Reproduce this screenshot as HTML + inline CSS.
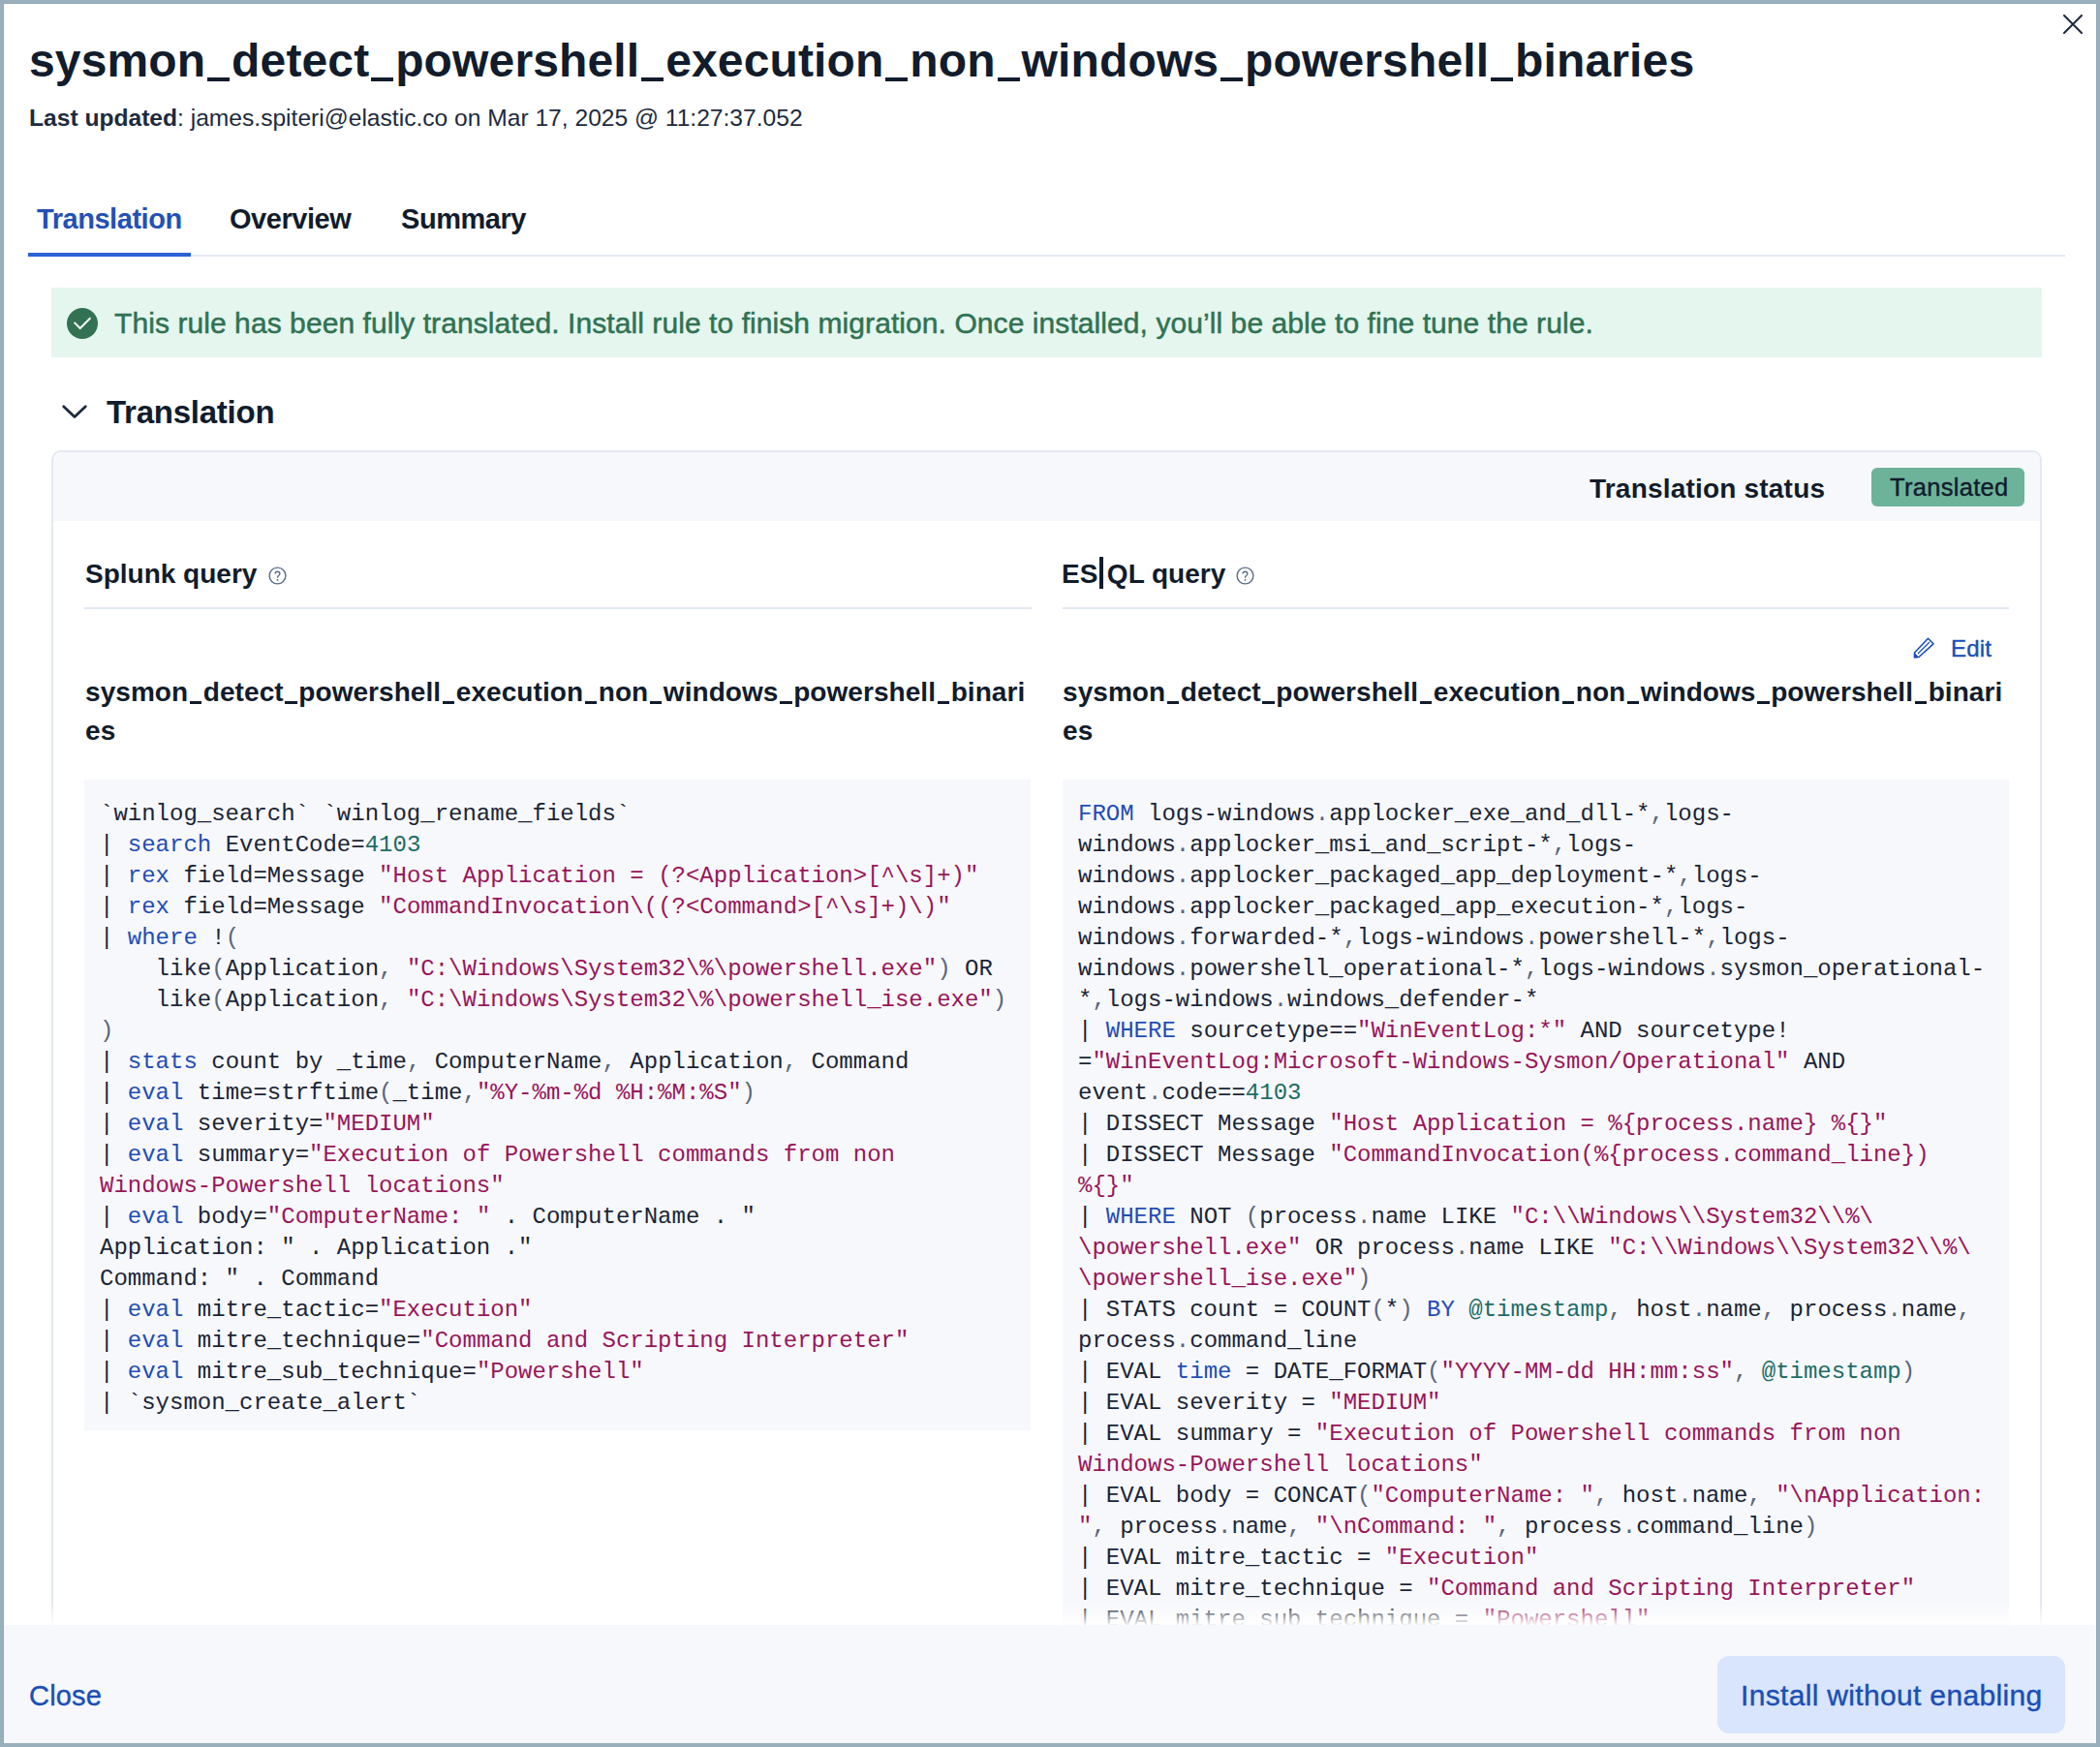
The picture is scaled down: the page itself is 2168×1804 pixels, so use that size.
<!DOCTYPE html>
<html><head><meta charset="utf-8">
<style>
html,body{margin:0;padding:0;}
body{width:2168px;height:1804px;position:relative;overflow:hidden;background:#99afbc;font-family:"Liberation Sans",sans-serif;color:#1d2a3e;}
.fly{position:absolute;left:4px;top:4px;width:2160px;height:1796px;background:#fff;overflow:hidden;box-shadow:0 0 0 1px #93a9b6;}
.a{position:absolute;white-space:pre;}
.b{font-weight:700;}
.title{left:30px;top:35px;font-size:48px;line-height:56px;font-weight:700;color:#111c2c;letter-spacing:0.14px;}
.sub{left:30px;top:106.5px;font-size:24.6px;line-height:30px;color:#1d2a3e;}
.tab{top:208.6px;font-size:29px;line-height:34px;font-weight:700;color:#111c2c;letter-spacing:-0.45px;}
.tabline{position:absolute;left:28px;top:263px;width:2104px;height:2px;background:#e3e8f2;}
.tabsel{position:absolute;left:29px;top:261px;width:168px;height:4px;background:#2a62d6;}
.callout{position:absolute;left:53px;top:297px;width:2055px;height:72px;background:#e5f6ee;}
.ctext{left:118px;top:316px;font-size:30px;line-height:36px;color:#307252;letter-spacing:0.075px;-webkit-text-stroke:0.5px #307252;}
.acc{left:110px;top:405.7px;font-size:33px;line-height:40px;font-weight:700;color:#111c2c;letter-spacing:-0.25px;}
.panel{position:absolute;left:53px;top:465px;width:2051px;height:1400px;border:2px solid #e3e8f2;border-radius:10px;background:#fff;}
.phead{position:absolute;left:55px;top:467px;width:2051px;height:71px;background:#f7f8fc;border-radius:8px 8px 0 0;}
.status{left:1641px;top:488px;letter-spacing:0.2px;font-size:28px;line-height:34px;font-weight:700;color:#111c2c;}
.badge{position:absolute;left:1932px;top:483px;width:158px;height:40px;border-radius:6px;background:#6db39a;}
.btext{left:1951px;top:487.9px;font-size:25.5px;line-height:30px;color:#111c2c;letter-spacing:0.3px;-webkit-text-stroke:0.4px #111c2c;}
.colh{top:575.7px;font-size:28px;line-height:34px;font-weight:700;color:#111c2c;}
.hr{position:absolute;top:627px;height:2px;background:#e3e8f2;}
.edit{left:2014px;top:654.6px;font-size:24px;line-height:30px;color:#1a4fb5;letter-spacing:0.2px;-webkit-text-stroke:0.4px #1a4fb5;}
.rname{top:694.6px;font-size:28px;line-height:40px;letter-spacing:0.06px;font-weight:700;color:#111c2c;width:977px;white-space:normal;word-break:break-all;}
.code{position:absolute;top:805px;width:977px;background:#f7f8fc;font-family:"Liberation Mono",monospace;font-size:24px;line-height:32px;color:#1a2536;}
.code pre{margin:0;padding:19.5px 16px 12.5px 16px;font:inherit;white-space:pre;}
.k{color:#1f4db5;}
.s{color:#98155a;}
.n{color:#1d6b66;}
.p{color:#5a6678;}
.foot{position:absolute;left:4px;top:1678px;width:2160px;height:122px;background:#f7f8fc;}
.close{left:30px;top:1733.5px;font-size:29px;line-height:34px;color:#1a4fb5;letter-spacing:0.2px;-webkit-text-stroke:0.4px #1a4fb5;}
.btn{position:absolute;left:1773px;top:1710px;width:359px;height:80px;border-radius:12px;background:#d9e5fd;}
.btntext{left:1797px;top:1733px;font-size:30px;line-height:36px;color:#1a4fb5;letter-spacing:0.33px;-webkit-text-stroke:0.4px #1a4fb5;}
.u{color:transparent;position:relative;}
.u::after{content:"";position:absolute;left:1.5px;right:1.5px;background:#111c2c;}
.title .u::after{top:43.6px;height:4.6px;left:2px;right:2px;}
.rname .u::after{top:25.4px;height:2.6px;}
</style></head><body>
<div class="fly"></div>
<!-- close X -->
<svg class="a" style="left:2130px;top:15px" width="20" height="20" viewBox="0 0 20 20"><path d="M1 1L19 19M19 1L1 19" stroke="#1d2a3e" stroke-width="2" stroke-linecap="round"/></svg>
<div class="a title">sysmon<span class="u">_</span>detect<span class="u">_</span>powershell<span class="u">_</span>execution<span class="u">_</span>non<span class="u">_</span>windows<span class="u">_</span>powershell<span class="u">_</span>binaries</div>
<div class="a sub"><b>Last updated</b>: james.spiteri@elastic.co on Mar 17, 2025 @ 11:27:37.052</div>
<div class="a tab" style="left:38px;color:#2351b5">Translation</div>
<div class="a tab" style="left:237px">Overview</div>
<div class="a tab" style="left:414px">Summary</div>
<div class="tabline"></div>
<div class="tabsel"></div>
<div class="callout"></div>
<svg class="a" style="left:69px;top:318px" width="32" height="32" viewBox="0 0 32 32"><circle cx="16" cy="16" r="16" fill="#327252"/><path d="M7.6 14.9L13.7 21L24.4 10.3" stroke="#f2fbf6" stroke-width="2" fill="none"/></svg>
<div class="a ctext">This rule has been fully translated. Install rule to finish migration. Once installed, you’ll be able to fine tune the rule.</div>
<svg class="a" style="left:63px;top:416px" width="28" height="18" viewBox="0 0 28 18"><path d="M2.7 3.8L14 14.6L25.3 3.8" stroke="#1d2a3e" stroke-width="2.8" fill="none" stroke-linecap="round" stroke-linejoin="round"/></svg>
<div class="a acc">Translation</div>
<div class="panel"></div>
<div class="phead"></div>
<div class="a status">Translation status</div>
<div class="badge"></div>
<div class="a btext">Translated</div>
<!-- column headers -->
<div class="a colh" style="left:88px">Splunk query</div>
<svg class="a" style="left:276.5px;top:584.6px" width="19" height="19" viewBox="0 0 19 19"><circle cx="9.5" cy="9.5" r="8.4" stroke="#5a6d8c" stroke-width="1.4" fill="none"/><path d="M7.1 7.6C7.1 6.2 8.2 5.2 9.5 5.2C10.8 5.2 11.9 6.2 11.9 7.5C11.9 8.6 11.1 9.1 10.4 9.6C9.8 10 9.5 10.4 9.5 11.2V11.8" stroke="#5a6d8c" stroke-width="1.4" fill="none"/><circle cx="9.5" cy="13.9" r="0.95" fill="#5a6d8c"/></svg>
<div class="hr" style="left:87px;width:978px"></div>
<div class="a colh" style="left:1096px">ES<span style="display:inline-block;width:3.5px;height:0;position:relative;margin:0 4px 0 2px"><span style="position:absolute;left:0;top:-26.7px;width:3.5px;height:33px;background:#111c2c"></span></span>QL query</div>
<svg class="a" style="left:1276px;top:584.6px" width="19" height="19" viewBox="0 0 19 19"><circle cx="9.5" cy="9.5" r="8.4" stroke="#5a6d8c" stroke-width="1.4" fill="none"/><path d="M7.1 7.6C7.1 6.2 8.2 5.2 9.5 5.2C10.8 5.2 11.9 6.2 11.9 7.5C11.9 8.6 11.1 9.1 10.4 9.6C9.8 10 9.5 10.4 9.5 11.2V11.8" stroke="#5a6d8c" stroke-width="1.4" fill="none"/><circle cx="9.5" cy="13.9" r="0.95" fill="#5a6d8c"/></svg>
<div class="hr" style="left:1097px;width:977px"></div>
<!-- edit -->
<svg class="a" style="left:1975px;top:658px" width="22" height="22" viewBox="0 0 22 22"><path d="M15.5 1.3L21 6.8L6 20.5L1.5 21L1.5 16Z" stroke="#1a4fb5" stroke-width="1.6" fill="none" stroke-linejoin="round"/><path d="M5 17L17 5" stroke="#1a4fb5" stroke-width="1.2"/><path d="M1.5 16L6 20.5L1.5 21Z" fill="#1a4fb5"/></svg>
<div class="a edit">Edit</div>
<div class="a rname" style="left:88px">sysmon<span class="u">_</span>detect<span class="u">_</span>powershell<span class="u">_</span>execution<span class="u">_</span>non<span class="u">_</span>windows<span class="u">_</span>powershell<span class="u">_</span>binaries</div>
<div class="a rname" style="left:1097px">sysmon<span class="u">_</span>detect<span class="u">_</span>powershell<span class="u">_</span>execution<span class="u">_</span>non<span class="u">_</span>windows<span class="u">_</span>powershell<span class="u">_</span>binaries</div>
<!--CODE-->
<div class="code" style="left:87px;height:672px"><pre>`winlog_search` `winlog_rename_fields`
| <span class="k">search</span> EventCode=<span class="n">4103</span>
| <span class="k">rex</span> field=Message <span class="s">"Host Application = (?&lt;Application&gt;[^\s]+)"</span>
| <span class="k">rex</span> field=Message <span class="s">"CommandInvocation\((?&lt;Command&gt;[^\s]+)\)"</span>
| <span class="k">where</span> !<span class="p">(</span>
    like<span class="p">(</span>Application<span class="p">,</span> <span class="s">"C:\Windows\System32\%\powershell.exe"</span><span class="p">)</span> OR
    like<span class="p">(</span>Application<span class="p">,</span> <span class="s">"C:\Windows\System32\%\powershell_ise.exe"</span><span class="p">)</span>
<span class="p">)</span>
| <span class="k">stats</span> count by _time<span class="p">,</span> ComputerName<span class="p">,</span> Application<span class="p">,</span> Command
| <span class="k">eval</span> time=strftime<span class="p">(</span>_time<span class="p">,</span><span class="s">"%Y-%m-%d %H:%M:%S"</span><span class="p">)</span>
| <span class="k">eval</span> severity=<span class="s">"MEDIUM"</span>
| <span class="k">eval</span> summary=<span class="s">"Execution of Powershell commands from non
Windows-Powershell locations"</span>
| <span class="k">eval</span> body=<span class="s">"ComputerName: "</span> . ComputerName . "
Application: " . Application ."
Command: " . Command
| <span class="k">eval</span> mitre_tactic=<span class="s">"Execution"</span>
| <span class="k">eval</span> mitre_technique=<span class="s">"Command and Scripting Interpreter"</span>
| <span class="k">eval</span> mitre_sub_technique=<span class="s">"Powershell"</span>
| `sysmon_create_alert`</pre></div>
<div class="code" style="left:1097px;height:900px"><pre><span class="k">FROM</span> logs-windows<span class="p">.</span>applocker_exe_and_dll-*<span class="p">,</span>logs-
windows<span class="p">.</span>applocker_msi_and_script-*<span class="p">,</span>logs-
windows<span class="p">.</span>applocker_packaged_app_deployment-*<span class="p">,</span>logs-
windows<span class="p">.</span>applocker_packaged_app_execution-*<span class="p">,</span>logs-
windows<span class="p">.</span>forwarded-*<span class="p">,</span>logs-windows<span class="p">.</span>powershell-*<span class="p">,</span>logs-
windows<span class="p">.</span>powershell_operational-*<span class="p">,</span>logs-windows<span class="p">.</span>sysmon_operational-
*<span class="p">,</span>logs-windows<span class="p">.</span>windows_defender-*
| <span class="k">WHERE</span> sourcetype==<span class="s">"WinEventLog:*"</span> AND sourcetype!
=<span class="s">"WinEventLog:Microsoft-Windows-Sysmon/Operational"</span> AND
event<span class="p">.</span>code==<span class="n">4103</span>
| DISSECT Message <span class="s">"Host Application = %{process.name} %{}"</span>
| DISSECT Message <span class="s">"CommandInvocation(%{process.command_line})
%{}"</span>
| <span class="k">WHERE</span> NOT <span class="p">(</span>process<span class="p">.</span>name LIKE <span class="s">"C:\\Windows\\System32\\%\
\powershell.exe"</span> OR process<span class="p">.</span>name LIKE <span class="s">"C:\\Windows\\System32\\%\
\powershell_ise.exe"</span><span class="p">)</span>
| STATS count = COUNT<span class="p">(</span>*<span class="p">)</span> <span class="k">BY</span> <span class="n">@timestamp</span><span class="p">,</span> host<span class="p">.</span>name<span class="p">,</span> process<span class="p">.</span>name<span class="p">,</span>
process<span class="p">.</span>command_line
| EVAL <span class="k">time</span> = DATE_FORMAT<span class="p">(</span><span class="s">"YYYY-MM-dd HH:mm:ss"</span><span class="p">,</span> <span class="n">@timestamp</span><span class="p">)</span>
| EVAL severity = <span class="s">"MEDIUM"</span>
| EVAL summary = <span class="s">"Execution of Powershell commands from non
Windows-Powershell locations"</span>
| EVAL body = CONCAT<span class="p">(</span><span class="s">"ComputerName: "</span><span class="p">,</span> host<span class="p">.</span>name<span class="p">,</span> <span class="s">"\nApplication:
"</span><span class="p">,</span> process<span class="p">.</span>name<span class="p">,</span> <span class="s">"\nCommand: "</span><span class="p">,</span> process<span class="p">.</span>command_line<span class="p">)</span>
| EVAL mitre_tactic = <span class="s">"Execution"</span>
| EVAL mitre_technique = <span class="s">"Command and Scripting Interpreter"</span>
| EVAL mitre_sub_technique = <span class="s">"Powershell"</span></pre></div>

<div style="position:absolute;left:4px;top:1655px;width:2160px;height:23px;background:linear-gradient(rgba(255,255,255,0),rgba(255,255,255,0.95))"></div>
<div class="foot"></div>
<div class="a close">Close</div>
<div class="btn"></div>
<div class="a btntext">Install without enabling</div>
<div style="position:absolute;left:0;top:1800px;width:2168px;height:4px;background:#99afbc"></div>
</body></html>
